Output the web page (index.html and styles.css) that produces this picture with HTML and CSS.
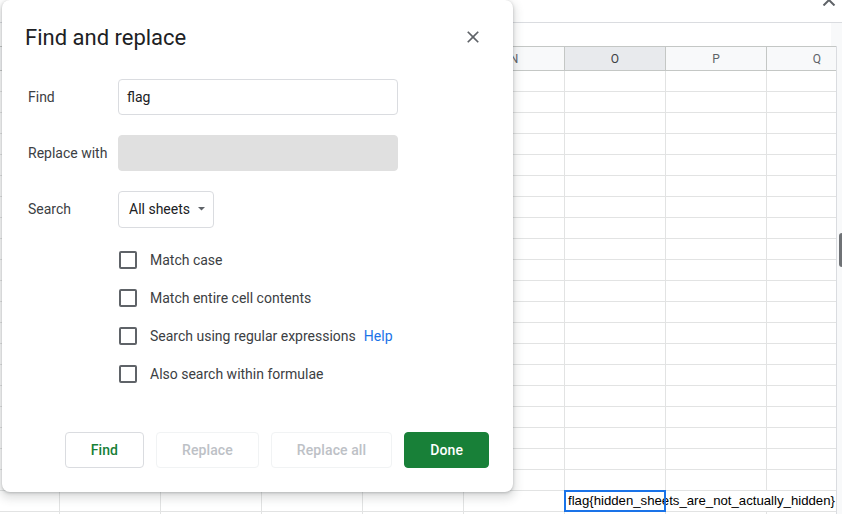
FILE: index.html
```html
<!DOCTYPE html>
<html lang="en">
<head>
<meta charset="utf-8">
<title>Find and replace</title>
<link rel="stylesheet" href="styles.css">
</head>
<body>
<div class="sheet">
  <div class="topbar">
    <svg class="chev" width="14" height="8" viewBox="0 0 14 8"><path d="M1.5 7.5 L7 2 L12.5 7.5" fill="none" stroke="#5f6368" stroke-width="2"/></svg>
  </div>
  <div class="formula"><div class="formula-scroll"></div></div>
  <div class="sheet-body">
    <div class="grid">
      <div class="col-head">
        <div class="hcell corner"></div>
        <div class="hcell">J</div>
        <div class="hcell">K</div>
        <div class="hcell">L</div>
        <div class="hcell">M</div>
        <div class="hcell">N</div>
        <div class="hcell sel">O</div>
        <div class="hcell">P</div>
        <div class="hcell">Q</div>
      </div>
      <div class="row"></div>
      <div class="row"></div>
      <div class="row"></div>
      <div class="row"></div>
      <div class="row"></div>
      <div class="row"></div>
      <div class="row"></div>
      <div class="row"></div>
      <div class="row"></div>
      <div class="row"></div>
      <div class="row"></div>
      <div class="row"></div>
      <div class="row"></div>
      <div class="row"></div>
      <div class="row"></div>
      <div class="row"></div>
      <div class="row"></div>
      <div class="row"></div>
      <div class="row"></div>
      <div class="row"></div>
      <div class="row">
        <div class="flag-cell">
          <span class="flag-text">flag{hidden_sheets_are_not_actually_hidden}</span>
          <div class="selection"></div>
        </div>
      </div>
      <div class="row"></div>
    </div>
    <div class="vscroll"><div class="thumb"></div></div>
  </div>
</div>

<div class="dialog">
  <div class="dlg-head">
    <h1 class="dlg-title">Find and replace</h1>
    <svg class="close" width="20" height="20" viewBox="0 0 24 24"><path d="M19 6.41L17.59 5 12 10.59 6.41 5 5 6.41 10.59 12 5 17.59 6.41 19 12 13.41 17.59 19 19 17.59 13.41 12z" fill="#5f6368"/></svg>
  </div>
  <div class="form">
    <div class="field">
      <div class="label">Find</div>
      <div class="input">flag</div>
    </div>
    <div class="field">
      <div class="label">Replace with</div>
      <div class="input disabled"></div>
    </div>
    <div class="field">
      <div class="label">Search</div>
      <div class="select">
        <span>All sheets</span>
        <svg width="7" height="4" viewBox="0 0 7 4"><path d="M0 0 H7 L3.5 3.5z" fill="#5f6368"/></svg>
      </div>
    </div>
  </div>
  <div class="checks">
    <div class="check"><span class="box"></span><span class="check-label">Match case</span></div>
    <div class="check"><span class="box"></span><span class="check-label">Match entire cell contents</span></div>
    <div class="check"><span class="box"></span><span class="check-label">Search using regular expressions</span><span class="help">Help</span></div>
    <div class="check"><span class="box"></span><span class="check-label">Also search within formulae</span></div>
  </div>
  <div class="buttons">
    <button class="btn find">Find</button>
    <button class="btn disabled">Replace</button>
    <button class="btn disabled">Replace all</button>
    <button class="btn done">Done</button>
  </div>
</div>
</body>
</html>
```

FILE: styles.css
```css
html, body {
  margin: 0;
  padding: 0;
}
body {
  width: 842px;
  height: 514px;
  overflow: hidden;
  position: relative;
  background: #fff;
  font-family: Roboto, "Liberation Sans", Arial, sans-serif;
}

/* ---------- spreadsheet background ---------- */
.sheet {
  display: flex;
  flex-direction: column;
  width: 842px;
  height: 514px;
}
.topbar {
  height: 22px;
  border-bottom: 1px solid #dadce0;
  display: flex;
  justify-content: flex-end;
  align-items: flex-start;
  padding-right: 6px;
}
.chev {
  margin-top: -2px;
}
.formula {
  height: 23px;
  display: flex;
  justify-content: flex-end;
}
.formula-scroll {
  width: 11px;
  background: #f8f9fa;
}
.sheet-body {
  display: flex;
  flex: 1;
  min-height: 0;
}
.grid {
  width: 836px;
  overflow: hidden;
}
.col-head {
  display: flex;
  height: 25px;
  box-sizing: border-box;
  border-top: 1px solid #c4c7c5;
  border-bottom: 1px solid #c4c7c5;
  background: #f8f9fa;
}
.hcell {
  flex: 0 0 101px;
  box-sizing: border-box;
  border-right: 1px solid #c4c7c5;
  display: flex;
  align-items: center;
  justify-content: center;
  font-size: 12px;
  color: #5f6368;
}
.hcell.corner {
  flex-basis: 60px;
}
.hcell.sel {
  background: #e8eaed;
  color: #3c4043;
}
.row {
  height: 21px;
  box-sizing: border-box;
  border-bottom: 1px solid #e2e3e3;
  background-image: linear-gradient(to right, #e2e3e3 1px, transparent 1px);
  background-size: 101px 100%;
  background-position: 59px 0;
  background-repeat: repeat-x;
  display: flex;
}
.flag-cell {
  position: relative;
  margin-left: 564px;
  flex: 1;
  background: #fff;
  height: 20px;
}
.flag-text {
  display: block;
  padding-left: 4px;
  font-family: "Liberation Sans", Arial, sans-serif;
  font-size: 13.2px;
  line-height: 20px;
  color: #000;
  white-space: nowrap;
}
.selection {
  position: absolute;
  left: 0;
  top: -1px;
  width: 102px;
  height: 22px;
  box-sizing: border-box;
  border: 2px solid #1a73e8;
}
.vscroll {
  flex: 1;
  background: #f8f9fa;
  border-left: 1px solid #dadce0;
  display: flex;
  justify-content: flex-end;
}
.thumb {
  margin-top: 187px;
  width: 3px;
  height: 34px;
  background: #6f7276;
  border-radius: 3px 0 0 3px;
}

/* ---------- dialog ---------- */
.dialog {
  position: absolute;
  left: 2px;
  top: 0;
  width: 511px;
  height: 492px;
  box-sizing: border-box;
  background: #fff;
  border-radius: 8px;
  box-shadow: 0 4px 8px 3px rgba(60, 64, 67, 0.15), 0 1px 3px rgba(60, 64, 67, 0.3);
  padding: 24px 24px 24px 21px;
  display: flex;
  flex-direction: column;
}
.dlg-head {
  display: flex;
  align-items: center;
  justify-content: space-between;
  height: 28px;
  padding-left: 2px;
}
.dlg-title {
  margin: 0;
  font-size: 22px;
  line-height: 28px;
  font-weight: 400;
  color: #202124;
}
.close {
  margin-right: 6px;
  margin-top: -2px;
}
.form {
  margin-top: 27px;
  padding-left: 5px;
  display: flex;
  flex-direction: column;
  gap: 20px;
}
.field {
  display: flex;
  align-items: center;
  height: 36px;
}
.label {
  width: 90px;
  font-size: 14px;
  color: #3c4043;
}
.input {
  width: 280px;
  height: 36px;
  box-sizing: border-box;
  border: 1px solid #dadce0;
  border-radius: 4px;
  padding: 0 8px;
  display: flex;
  align-items: center;
  font-size: 14px;
  color: #202124;
}
.input.disabled {
  background: #e0e0e0;
  border-color: #e0e0e0;
}
.select {
  height: 37px;
  box-sizing: border-box;
  border: 1px solid #dadce0;
  border-radius: 4px;
  padding: 0 8px 0 10px;
  display: flex;
  align-items: center;
  gap: 8px;
  font-size: 14px;
  color: #202124;
}
.checks {
  margin-top: 24px;
  padding-left: 96px;
  display: flex;
  flex-direction: column;
  gap: 20px;
}
.check {
  display: flex;
  align-items: center;
  height: 18px;
  font-size: 14px;
  color: #3c4043;
}
.box {
  width: 18px;
  height: 18px;
  box-sizing: border-box;
  border: 2px solid #5f6368;
  border-radius: 2px;
  margin-right: 13px;
}
.help {
  margin-left: 8px;
  color: #1a73e8;
}
.buttons {
  margin-top: auto;
  display: flex;
  justify-content: flex-end;
  gap: 12px;
}
.btn {
  height: 36px;
  box-sizing: border-box;
  padding: 0 25px;
  border: 1px solid #dadce0;
  border-radius: 4px;
  background: #fff;
  font-family: Roboto, "Liberation Sans", Arial, sans-serif;
  font-size: 14px;
  font-weight: 500;
  letter-spacing: 0.1px;
  color: #188038;
}
.btn.disabled {
  border-color: #f1f3f4;
  color: #bdc1c6;
}
.btn.done {
  background: #188038;
  border-color: #188038;
  color: #fff;
}
```
